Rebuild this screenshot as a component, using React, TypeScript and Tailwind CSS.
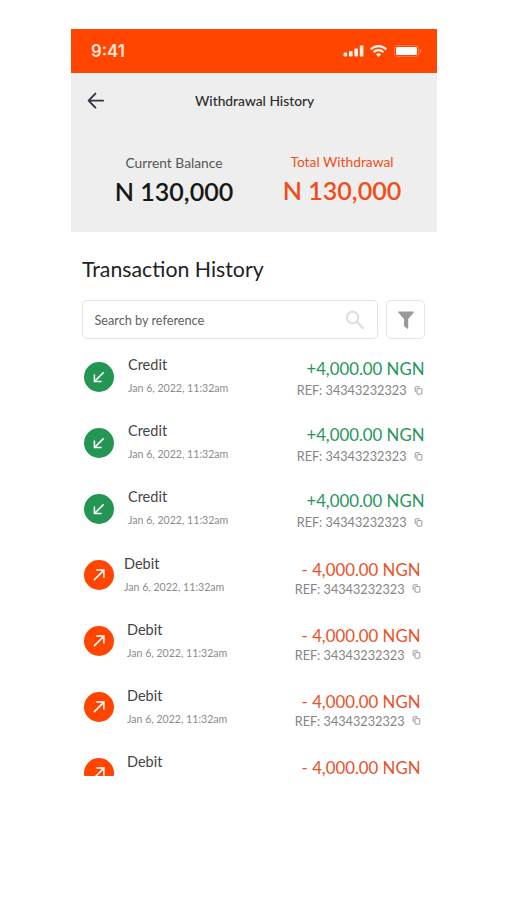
import clsx from "clsx";

type TransactionType = "credit" | "debit";

interface Transaction {
  id: number;
  type: TransactionType;
  amount: string;
  date?: string;
  reference?: string;
  compact?: boolean;
}

const TRANSACTIONS: Transaction[] = [
  ...[1, 2, 3].map((id) => ({
    amount: "+4,000.00 NGN",
    date: "Jan 6, 2022, 11:32am",
    id,
    reference: "34343232323",
    type: "credit" as const
  })),
  ...[4, 5, 6].map((id) => ({
    amount: "- 4,000.00 NGN",
    compact: id === 4,
    date: "Jan 6, 2022, 11:32am",
    id,
    reference: "34343232323",
    type: "debit" as const
  })),
  { amount: "- 4,000.00 NGN", id: 7, type: "debit" }
];

const CopyIcon = () => (
  <svg
    className="size-[9px]"
    fill="none"
    stroke="#8c8c8c"
    strokeLinejoin="round"
    viewBox="0 0 9 9"
  >
    <rect height="5.6" rx="0.8" strokeWidth="0.9" width="4.8" x="3" y="2.6" />
    <path d="M1.2 6.2V1.5a.7.7 0 0 1 .7-.7h4" strokeWidth="0.9" />
  </svg>
);

const StatusBar = () => (
  <div className="flex h-11 shrink-0 items-center justify-between bg-[#ff4500] pr-[15px] pl-5">
    <span className="font-['Inter',sans-serif] font-semibold text-[#ffe6da] text-[16.8px] leading-5">
      9:41
    </span>
    <div className="flex items-center">
      <svg className="h-3 w-[21px]" fill="#fff0e8" viewBox="0 0 21 12">
        <rect height="4" rx="0.8" width="3.6" x="0.6" y="7.6" />
        <rect height="5.6" rx="0.8" width="3.6" x="6" y="6" />
        <rect height="8" rx="0.8" width="3.6" x="11.4" y="3.6" />
        <rect height="11" rx="0.8" width="3.6" x="16.8" y="0.6" />
      </svg>
      <svg
        className="ml-1.5 h-3 w-[17px]"
        fill="none"
        stroke="#fff0e8"
        strokeWidth="2.2"
        viewBox="0 0 17 12"
      >
        <path d="M.8 4.4a10.9 10.9 0 0 1 15.4 0" />
        <path d="M3.6 7.2a6.9 6.9 0 0 1 9.8 0" />
        <path d="M8.5 12 6 9.5a3.5 3.5 0 0 1 5 0z" fill="#fff0e8" stroke="none" />
      </svg>
      <svg className="ml-[7px] h-3 w-7" fill="none" viewBox="0 0 28 12">
        <rect
          height="11"
          rx="2.8"
          stroke="#fff"
          strokeOpacity="0.25"
          width="24"
          x="0.5"
          y="0.5"
        />
        <rect fill="#fff" height="8" rx="1.2" width="21" x="2" y="2" />
        <path d="M26 4v4a2.2 2.2 0 0 0 0-4" fill="#fff" fillOpacity="0.4" />
      </svg>
    </div>
  </div>
);

interface BalanceProps {
  label: string;
  value: string;
  className?: string;
}

const Balance = ({ label, value, className }: BalanceProps) => (
  <div className={clsx("flex flex-col items-center", className)}>
    <span className="text-[13.8px] leading-5">{label}</span>
    <span className="mt-0.5 font-semibold text-[25.1px] leading-8">
      {value}
    </span>
  </div>
);

const Header = () => (
  <header className="h-[159px] shrink-0 bg-[#eeeeee]">
    <div className="flex items-center pt-[18px] pl-4">
      <svg
        className="h-[18px] w-[18px]"
        fill="none"
        stroke="#35334a"
        strokeLinecap="round"
        strokeLinejoin="round"
        strokeWidth="1.9"
        viewBox="0 0 18 18"
      >
        <path d="M16.2 8.6H1.6M8.4 1.6 1.6 8.6l6.8 7" />
      </svg>
      <h1 className="ml-[90px] font-medium text-[#2b2b2b] text-[13.8px] leading-5">
        Withdrawal History
      </h1>
    </div>
    <div className="flex pt-[42px] pl-11">
      <Balance
        className="w-[118px] whitespace-nowrap text-[#555555] [&>span:last-child]:text-[#171717]"
        label="Current Balance"
        value="N 130,000"
      />
      <Balance
        className="-mt-px ml-[50px] w-[118px] whitespace-nowrap text-[#f04e1b]"
        label="Total Withdrawal"
        value="N 130,000"
      />
    </div>
  </header>
);

const SearchBar = () => (
  <div className="flex gap-2 pr-3 pl-[11px]">
    <div className="flex h-[39px] w-[297px] items-center justify-between rounded-[5px] border border-[#e4e4e4] pr-3 pl-[11.5px]">
      <span className="pt-0.5 text-[#606060] text-[12.7px]">
        Search by reference
      </span>
      <svg
        className="size-5"
        fill="none"
        stroke="#dddddd"
        strokeWidth="1.9"
        viewBox="0 0 20 20"
      >
        <circle cx="7.6" cy="7.6" r="5.8" />
        <path d="m12 12 6.6 6.6" strokeWidth="2.3" />
      </svg>
    </div>
    <button
      aria-label="Filter"
      className="flex h-[39px] w-[39px] items-center justify-center rounded-[5px] border border-[#e4e4e4]"
      type="button"
    >
      <svg className="h-[18px] w-4" fill="#999999" viewBox="0 0 16 18">
        <path d="M.8.5h14.4c.6 0 .8.7.5 1.1L10.2 8v9.3c0 .5-.4.7-.8.4l-3-2.3a1 1 0 0 1-.4-.8V8L.3 1.6C0 1.2.2.5.8.5z" />
      </svg>
    </button>
  </div>
);

const TransactionIcon = ({ isCredit }: { isCredit: boolean }) => (
  <div
    className={clsx(
      "flex size-[30px] items-center justify-center rounded-full",
      isCredit ? "bg-[#249654]" : "bg-[#ff4500]"
    )}
  >
    <svg
      className="size-3"
      fill="none"
      stroke="#ffffff"
      strokeWidth="1.5"
      viewBox="0 0 12 12"
    >
      {isCredit ? (
        <path d="M10.6 1.4 1.4 10.6M1.4 3.4v7.2h7.2" />
      ) : (
        <path d="M.9 11.1 10.9 1.1M3.2 1.1h7.7v7.7" />
      )}
    </svg>
  </div>
);

const TransactionRow = ({ transaction }: { transaction: Transaction }) => {
  const isCredit = transaction.type === "credit";
  const isPartial = !transaction.date;

  return (
    <li
      className={clsx(
        "flex shrink-0 items-start pl-[13px]",
        isPartial ? "h-6" : "h-[66.2px]"
      )}
    >
      <div
        className={clsx(
          isCredit ? "mt-[7px]" : "mt-1.5",
          isPartial && "h-[18px] overflow-hidden"
        )}
      >
        <TransactionIcon isCredit={isCredit} />
      </div>
      <div
        className={clsx(
          "flex flex-col",
          isCredit ? "ml-3.5" : transaction.compact ? "ml-2.5" : "ml-[13px]"
        )}
      >
        <span className="text-[#444444] text-[14.5px] leading-5">
          {isCredit ? "Credit" : "Debit"}
        </span>
        {transaction.date && (
          <span className="mt-[5px] text-[#8c8c8c] text-[10.6px] leading-4">
            {transaction.date}
          </span>
        )}
      </div>
      <div
        className={clsx(
          "ml-auto flex flex-col items-end",
          isCredit ? "pt-1 pr-[12.5px]" : "pt-1.5 pr-[14.5px]"
        )}
      >
        <span
          className={clsx(
            "text-[16.8px]",
            isCredit
              ? "text-[#27965a] leading-5"
              : "mr-0.5 text-[#ea522a] leading-[19px]"
          )}
        >
          {transaction.amount}
        </span>
        {transaction.reference && (
          <span
            className={clsx(
              "mr-[1.5px] flex items-center text-[#858585] text-[12.7px] leading-5",
              isCredit && "mt-px"
            )}
          >
            REF: {transaction.reference}
            <span className="ml-[7.5px]">
              <CopyIcon />
            </span>
          </span>
        )}
      </div>
    </li>
  );
};

const App = () => (
  <div className="h-[900px] w-[507px] bg-white pt-[29px] pl-[71px] font-['Lato',sans-serif]">
    <main className="flex w-[366px] flex-col">
      <StatusBar />
      <Header />
      <h2 className="mt-[23px] mb-[17px] pl-[11px] text-[#222222] text-[21.3px] leading-7">
        Transaction History
      </h2>
      <SearchBar />
      <ul className="mt-4 flex flex-col">
        {TRANSACTIONS.map((transaction) => (
          <TransactionRow key={transaction.id} transaction={transaction} />
        ))}
      </ul>
    </main>
  </div>
);

export default App;
